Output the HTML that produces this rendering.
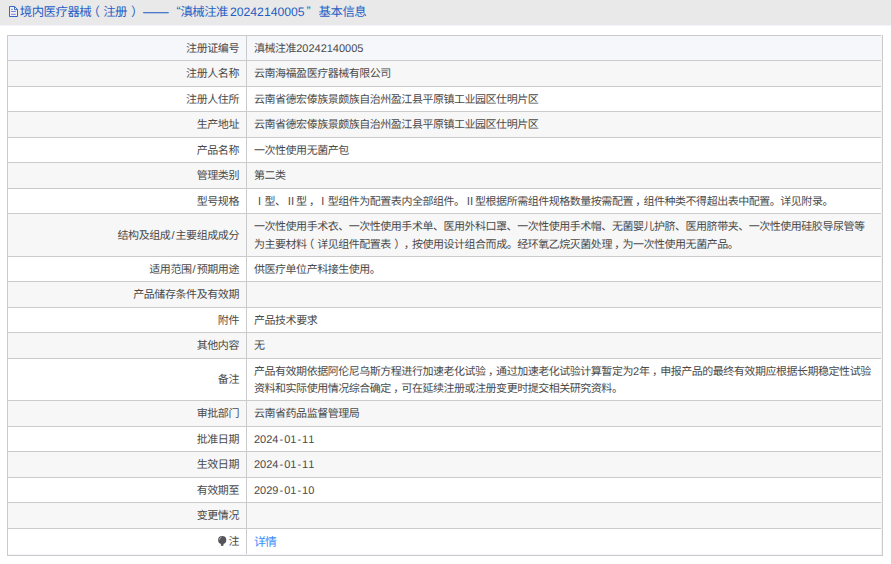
<!DOCTYPE html>
<html lang="zh-CN">
<head>
<meta charset="utf-8">
<title>境内医疗器械（注册）基本信息</title>
<style>
html,body{margin:0;padding:0;background:#fff;}
body{width:891px;height:564px;position:relative;overflow:hidden;
  font-family:"Liberation Sans",sans-serif;color:#4a4a4a;text-rendering:geometricPrecision;
  text-spacing-trim:space-all;font-kerning:none;}
.hd{position:absolute;left:0;top:0;width:891px;height:25px;background:#e9e9e9;
  border-bottom:1px solid #f1f4fb;}
.hd svg{position:absolute;left:9px;top:6px;}
.hd .t{position:absolute;left:0;top:0;width:400px;height:25px;margin:0;font-weight:normal;
  font-size:12.4px;letter-spacing:-0.5px;color:#1f5fc4;white-space:nowrap;}
.hd .t>span{position:absolute;top:0;height:24px;line-height:24px;}
.hd .t .n{font-size:12.2px;letter-spacing:0;}
.hd .t .q{letter-spacing:0;}
.tb{position:absolute;left:7px;top:35px;width:876px;box-sizing:border-box;
  border-left:1px solid #cbcbcb;border-right:1px solid #cbcbcb;border-bottom:1px solid #cbcbcb;
  background:#f2f4fb;padding-bottom:1px;}
.r{position:relative;box-sizing:border-box;border-top:1px solid #cbcbcb;width:873px;
  font-size:11px;letter-spacing:-0.475px;line-height:17.4px;background:#fff;overflow:hidden;}
.r.g{background:#f7f7f7;}
.r.h{background:#f5f7fb;}
.l,.v{position:absolute;top:0;bottom:0;display:flex;align-items:center;white-space:nowrap;
  box-sizing:border-box;padding-top:3px;}
.l{left:0;width:238px;justify-content:flex-end;padding-right:7px;letter-spacing:-0.42px;}
.v{left:238px;right:0;border-left:1px solid #cbcbcb;padding-left:7px;}
.ln{display:block;height:17.4px;white-space:nowrap;}
.j{display:inline-block;white-space:nowrap;text-align:justify;text-align-last:justify;
  text-justify:inter-character;vertical-align:baseline;}
.n{letter-spacing:0;}
.hy{padding:0 1px;}
.cm{position:relative;left:2.3px;}
.pl{position:relative;left:-3.5px;}
.pr{position:relative;left:3.5px;}
.s{letter-spacing:0;padding:0 1px;}
.a{color:#3a8dfd;font-size:11.9px;letter-spacing:-0.9px;}
.ic{display:inline-block;position:relative;top:0.6px;margin-right:1.7px;vertical-align:baseline;}
</style>
</head>
<body>
<div class="hd">
  <svg width="9" height="11" viewBox="0 0 9 11"><path d="M0.5 0.5h5.1l2.9 2.9v7.1h-8z" fill="#f1f1f4" stroke="#2a5fc4" stroke-width="0.95"/><path d="M5.5 0.6v3h3" fill="none" stroke="#2a5fc4" stroke-width="0.9"/><path d="M2 3.4h1.8M2 5.5h4.8M2 8.3h4.8" stroke="#6a78d2" stroke-width="0.9"/></svg>
  <h1 class="t"><span style="left:19.8px"><span class="j" style="width:71.39px">境内医疗器械</span></span><span style="left:87.4px">（</span><span style="left:103.2px"><span class="j" style="width:23.83px">注册</span></span><span style="left:130.9px">）</span><span class="q" style="left:142.9px;top:-0.4px;letter-spacing:0;font-size:12.9px">——</span><span class="q" style="left:176.4px;top:-1px">“</span><span style="left:180.4px"><span class="j" style="width:47.61px">滇械注准</span></span><span class="n" style="left:230px">20242140005</span><span class="q" style="left:306.4px;top:-1px">”</span><span style="left:318.6px"><span class="j" style="width:47.61px">基本信息</span></span></h1>
</div>
<div class="tb">
  <div class="r h" style="height:25px"><div class="l"><span class="ln"><span class="j" style="width:52.96px">注册证编号</span></span></div><div class="v"><span class="ln"><span class="j" style="width:42.16px">滇械注准</span><span class="n">20242140005</span></span></div></div>
  <div class="r g" style="height:26px"><div class="l"><span class="ln"><span class="j" style="width:52.96px">注册人名称</span></span></div><div class="v"><span class="ln"><span class="j" style="width:136.88px">云南海福盈医疗器械有限公司</span></span></div></div>
  <div class="r" style="height:25px"><div class="l"><span class="ln"><span class="j" style="width:52.96px">注册人住所</span></span></div><div class="v"><span class="ln"><span class="j" style="width:284.24px">云南省德宏傣族景颇族自治州盈江县平原镇工业园区仕明片区</span></span></div></div>
  <div class="r g" style="height:26px"><div class="l"><span class="ln"><span class="j" style="width:42.38px">生产地址</span></span></div><div class="v"><span class="ln"><span class="j" style="width:284.24px">云南省德宏傣族景颇族自治州盈江县平原镇工业园区仕明片区</span></span></div></div>
  <div class="r" style="height:25px"><div class="l"><span class="ln"><span class="j" style="width:42.38px">产品名称</span></span></div><div class="v"><span class="ln"><span class="j" style="width:94.78px">一次性使用无菌产包</span></span></div></div>
  <div class="r g" style="height:26px"><div class="l"><span class="ln"><span class="j" style="width:42.38px">管理类别</span></span></div><div class="v"><span class="ln"><span class="j" style="width:31.63px">第二类</span></span></div></div>
  <div class="r" style="height:25px"><div class="l"><span class="ln"><span class="j" style="width:42.38px">型号规格</span></span></div><div class="v"><span class="ln"><span class="j" style="width:578.94px">Ⅰ型、Ⅱ型<span class="cm">，</span>Ⅰ型组件为配置表内全部组件。Ⅱ型根据所需组件规格数量按需配置<span class="cm">，</span>组件种类不得超出表中配置。详见附录。</span></span></div></div>
  <div class="r g" style="height:43px"><div class="l"><span class="ln"><span class="j" style="width:121.50px">结构及组成<span class="s">/</span>主要组成成分</span></span></div><div class="v"><span><span class="ln"><span class="j" style="width:610.50px">一次性使用手术衣、一次性使用手术单、医用外科口罩、一次性使用手术帽、无菌婴儿护脐、医用脐带夹、一次性使用硅胶导尿管等</span></span><span class="ln"><span class="j" style="width:484.25px">为主要材料<span class="pl">（</span>详见组件配置表<span class="pr">）</span><span class="cm">，</span>按使用设计组合而成。经环氧乙烷灭菌处理<span class="cm">，</span>为一次性使用无菌产品。</span></span></span></div></div>
  <div class="r" style="height:25px"><div class="l"><span class="ln"><span class="j" style="width:89.77px">适用范围<span class="s">/</span>预期用途</span></span></div><div class="v"><span class="ln"><span class="j" style="width:126.36px">供医疗单位产科接生使用。</span></span></div></div>
  <div class="r g" style="height:26px"><div class="l"><span class="ln"><span class="j" style="width:105.86px">产品储存条件及有效期</span></span></div><div class="v"></div></div>
  <div class="r" style="height:25px"><div class="l"><span class="ln"><span class="j" style="width:21.22px">附件</span></span></div><div class="v"><span class="ln"><span class="j" style="width:63.21px">产品技术要求</span></span></div></div>
  <div class="r g" style="height:26px"><div class="l"><span class="ln"><span class="j" style="width:42.38px">其他内容</span></span></div><div class="v"><span class="ln"><span class="j" style="width:10.58px">无</span></span></div></div>
  <div class="r" style="height:42px"><div class="l"><span class="ln"><span class="j" style="width:21.22px">备注</span></span></div><div class="v"><span><span class="ln"><span class="j" style="width:378.97px">产品有效期依据阿伦尼乌斯方程进行加速老化试验<span class="cm">，</span>通过加速老化试验计算暂定为</span><span class="n">2</span><span class="j" style="width:231.61px">年<span class="cm">，</span>申报产品的最终有效期应根据长期稳定性试验</span></span><span class="ln"><span class="j" style="width:368.44px">资料和实际使用情况综合确定<span class="cm">，</span>可在延续注册或注册变更时提交相关研究资料。</span></span></span></div></div>
  <div class="r g" style="height:26px"><div class="l"><span class="ln"><span class="j" style="width:42.38px">审批部门</span></span></div><div class="v"><span class="ln"><span class="j" style="width:105.30px">云南省药品监督管理局</span></span></div></div>
  <div class="r" style="height:25px"><div class="l"><span class="ln"><span class="j" style="width:42.38px">批准日期</span></span></div><div class="v"><span class="ln"><span class="n">2024<span class="hy">-</span>01<span class="hy">-</span>11</span></span></div></div>
  <div class="r g" style="height:26px"><div class="l"><span class="ln"><span class="j" style="width:42.38px">生效日期</span></span></div><div class="v"><span class="ln"><span class="n">2024<span class="hy">-</span>01<span class="hy">-</span>11</span></span></div></div>
  <div class="r" style="height:25px"><div class="l"><span class="ln"><span class="j" style="width:42.38px">有效期至</span></span></div><div class="v"><span class="ln"><span class="n">2029<span class="hy">-</span>01<span class="hy">-</span>10</span></span></div></div>
  <div class="r g" style="height:26px"><div class="l"><span class="ln"><span class="j" style="width:42.38px">变更情况</span></span></div><div class="v"></div></div>
  <div class="r" style="height:26px"><div class="l"><span class="ln"><svg class="ic" width="8.4" height="10" viewBox="0 0 8.4 10"><circle cx="4.2" cy="4.1" r="4.1" fill="#54545a"/><path d="M2.9 7.6h2.6v1.7a1.3 0.7 0 0 1 -2.6 0z" fill="#54545a"/><path d="M1.3 3.9a2.9 2.9 0 0 1 2.3-2.7" fill="none" stroke="#b9bcc8" stroke-width="0.8"/></svg><span class="j" style="width:10.64px">注</span></span></div><div class="v"><span class="ln"><span class="j a" style="width:22.03px">详情</span></span></div></div>
</div>
</body>
</html>
